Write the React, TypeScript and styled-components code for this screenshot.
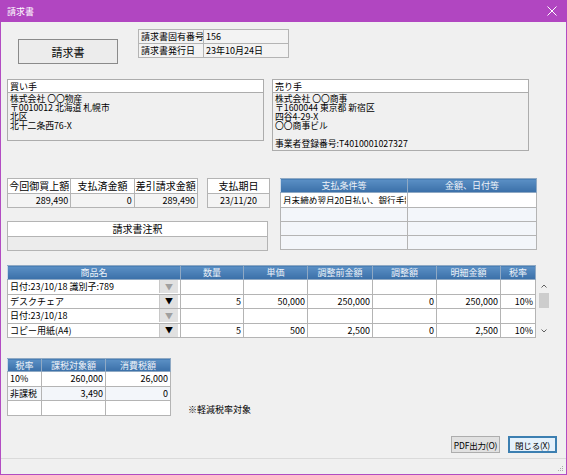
import styled, { createGlobalStyle } from "styled-components";

const GlobalStyle = createGlobalStyle`
  body { margin: 0; background: #fff; }
  * { box-sizing: border-box; }
  table { border-collapse: collapse; table-layout: fixed; }
`;

const Window = styled.div`
  width: 567px;
  height: 475px;
  display: flex;
  flex-direction: column;
  font-family: "Noto Sans CJK JP", "Noto Sans", sans-serif;
  font-size: 9px;
  color: #000;
`;

const TitleBar = styled.div`
  height: 22px;
  flex-shrink: 0;
  background: #b146c1;
  color: #fff;
  display: flex;
  align-items: center;
  justify-content: space-between;
  padding: 0 10px 0 7px;
  font-size: 9px;
`;

const Body = styled.div`
  flex: 1;
  display: flex;
  flex-direction: column;
  background: #f0f0f0;
  border: 1px solid #b24cc2;
  border-top: none;
  padding: 0 6px;
`;

const TopRow = styled.div`
  margin-top: 7px;
  display: flex;
  align-items: flex-start;
  padding-left: 11px;
  gap: 20px;
`;

const BigButton = styled.div`
  margin-top: 10px;
  width: 100px;
  height: 25px;
  border: 1px solid #8a8a8a;
  background: #ececec;
  display: flex;
  align-items: center;
  justify-content: center;
  font-size: 11px;
`;

const Cell = styled.td<{ $align?: string; $bg?: string; $h?: number }>`
  border: 1px solid #b4b4b4;
  height: ${(p) => p.$h ?? 14}px;
  padding: 0 2px;
  text-align: ${(p) => p.$align ?? "left"};
  background: ${(p) => p.$bg ?? "#fff"};
  white-space: nowrap;
  overflow: hidden;
  line-height: 1;
`;

const HeadCell = styled.th<{ $h?: number }>`
  border: 1px solid #8fa9c4;
  border-left-color: #c9d8e8;
  height: ${(p) => p.$h ?? 14}px;
  padding: 0;
  font-weight: normal;
  color: #eef3f9;
  background: linear-gradient(#5b90c5, #3a6fa8);
  line-height: 1;
`;

const PlainHead = styled.td`
  border: 1px solid #b4b4b4;
  height: 15px;
  background: #fff;
  text-align: center;
  font-size: 10px;
  line-height: 1;
`;

const PartyRow = styled.div`
  margin-top: 15px;
  display: flex;
  align-items: flex-start;
  gap: 8px;
`;

const Party = styled.div`
  width: 257px;
`;

const PartyHead = styled.div`
  height: 14px;
  border: 1px solid #acacac;
  background: #fff;
  padding: 2px 2px 0;
  line-height: 1;
`;

const PartyBody = styled.div<{ $h: number }>`
  height: ${(p) => p.$h}px;
  border: 1px solid #acacac;
  border-top: none;
  padding: 1px 2px;
`;

const PartyLine = styled.div`
  height: 9px;
  line-height: 9px;
  font-size: 8.8px;
`;

const MidRow = styled.div`
  margin-top: 27px;
  display: flex;
  align-items: flex-start;
  gap: 7px;
`;

const LeftCol = styled.div`
  width: 266px;
  display: flex;
  flex-direction: column;
  gap: 13px;
`;

const AmountRow = styled.div`
  display: flex;
  gap: 9px;
`;

const TermsText = styled.div`
  width: 123px;
  overflow: hidden;
  white-space: nowrap;
  font-size: 8.6px;
`;

const GridRow = styled.div`
  margin-top: 14px;
  display: flex;
  align-items: flex-start;
`;

const NameCell = styled.div`
  display: flex;
  align-items: center;
  justify-content: space-between;
  height: 100%;
`;

const DropBtn = styled.span<{ $dim?: boolean }>`
  width: 19px;
  height: 13px;
  margin-right: 2px;
  background: #e1e1e1;
  border-left: 1px solid #c8c8c8;
  display: flex;
  align-items: center;
  justify-content: center;
  font-size: 8px;
  color: ${(p) => (p.$dim ? "#a0a0a0" : "#000")};
`;

const ScrollBar = styled.div`
  margin-left: 3px;
  margin-top: 14px;
  width: 10px;
  height: 58px;
  display: flex;
  flex-direction: column;
  align-items: center;
`;

const Thumb = styled.div`
  width: 10px;
  height: 15px;
  background: #cdcdcd;
  margin: 3px 0 auto;
`;

const BottomRow = styled.div`
  margin-top: 20px;
  display: flex;
  align-items: flex-end;
`;

const Note = styled.div`
  margin-left: 17px;
  font-size: 9px;
`;

const ButtonRow = styled.div`
  margin-top: 20px;
  display: flex;
  justify-content: flex-end;
  gap: 8px;
  padding-right: 3px;
`;

const Btn = styled.div<{ $focus?: boolean }>`
  width: 49px;
  height: 17px;
  display: flex;
  align-items: center;
  justify-content: center;
  white-space: nowrap;
  letter-spacing: -0.2px;
  background: ${(p) => (p.$focus ? "#e5f1fb" : "#e1e1e1")};
  border: ${(p) => (p.$focus ? "2px solid #3c7fb1" : "1px solid #adadad")};
  font-size: 8.5px;
`;

const StatusBar = styled.div`
  margin: auto -6px 0;
  height: 16px;
  border-top: 1px solid #dadada;
  display: flex;
  justify-content: flex-end;
  align-items: flex-end;
  padding: 0 2px 2px 0;
`;

const items = [
  { name: "日付:23/10/18 識別子:789", dim: true },
  { name: "デスクチェア", qty: "5", price: "50,000", pre: "250,000", adj: "0", amt: "250,000", rate: "10%" },
  { name: "日付:23/10/18", dim: true },
  { name: "コピー用紙(A4)", qty: "5", price: "500", pre: "2,500", adj: "0", amt: "2,500", rate: "10%" },
];

export default function App() {
  return (
    <>
      <GlobalStyle />
      <Window>
        <TitleBar>
          <span>請求書</span>
          <svg width="10" height="10" viewBox="0 0 10 10">
            <path d="M0.5 0.5 L9.5 9.5 M9.5 0.5 L0.5 9.5" stroke="#fff" strokeWidth="1" />
          </svg>
        </TitleBar>
        <Body>
          <TopRow>
            <BigButton>請求書</BigButton>
            <table style={{ width: 150 }}>
              <colgroup>
                <col style={{ width: 65 }} />
                <col style={{ width: 85 }} />
              </colgroup>
              <tbody>
                <tr>
                  <Cell $bg="#f3f3f3">請求書固有番号</Cell>
                  <Cell $bg="#f3f3f3">156</Cell>
                </tr>
                <tr>
                  <Cell $bg="#f3f3f3">請求書発行日</Cell>
                  <Cell $bg="#f3f3f3">23年10月24日</Cell>
                </tr>
              </tbody>
            </table>
          </TopRow>

          <PartyRow>
            <Party>
              <PartyHead>買い手</PartyHead>
              <PartyBody $h={48}>
                <PartyLine>株式会社 〇〇物産</PartyLine>
                <PartyLine>〒0010012 北海道 札幌市</PartyLine>
                <PartyLine>北区</PartyLine>
                <PartyLine>北十二条西76-X</PartyLine>
              </PartyBody>
            </Party>
            <Party>
              <PartyHead>売り手</PartyHead>
              <PartyBody $h={58}>
                <PartyLine>株式会社 〇〇商事</PartyLine>
                <PartyLine>〒1600044 東京都 新宿区</PartyLine>
                <PartyLine>四谷4-29-X</PartyLine>
                <PartyLine>〇〇商事ビル</PartyLine>
                <PartyLine />
                <PartyLine>事業者登録番号:T4010001027327</PartyLine>
              </PartyBody>
            </Party>
          </PartyRow>

          <MidRow>
            <LeftCol>
              <AmountRow>
                <table style={{ width: 191 }}>
                  <tbody>
                    <tr>
                      <PlainHead>今回御買上額</PlainHead>
                      <PlainHead>支払済金額</PlainHead>
                      <PlainHead>差引請求金額</PlainHead>
                    </tr>
                    <tr>
                      <Cell $align="right" $bg="#f4f4f4">289,490</Cell>
                      <Cell $align="right" $bg="#f4f4f4">0</Cell>
                      <Cell $align="right" $bg="#f4f4f4">289,490</Cell>
                    </tr>
                  </tbody>
                </table>
                <table style={{ width: 63 }}>
                  <tbody>
                    <tr>
                      <PlainHead>支払期日</PlainHead>
                    </tr>
                    <tr>
                      <Cell $align="center" $bg="#f4f4f4">23/11/20</Cell>
                    </tr>
                  </tbody>
                </table>
              </AmountRow>
              <table style={{ width: 261 }}>
                <tbody>
                  <tr>
                    <PlainHead>請求書注釈</PlainHead>
                  </tr>
                  <tr>
                    <Cell $bg="#ececec"></Cell>
                  </tr>
                </tbody>
              </table>
            </LeftCol>
            <table style={{ width: 256 }}>
              <colgroup>
                <col style={{ width: 127 }} />
                <col style={{ width: 129 }} />
              </colgroup>
              <thead>
                <tr>
                  <HeadCell>支払条件等</HeadCell>
                  <HeadCell>金額、日付等</HeadCell>
                </tr>
              </thead>
              <tbody>
                <tr>
                  <Cell $h={15}>
                    <TermsText>月末締め翌月20日払い、銀行手数料</TermsText>
                  </Cell>
                  <Cell $h={15}></Cell>
                </tr>
                {[0, 1, 2].map((i) => (
                  <tr key={i}>
                    <Cell $h={14} $bg="#f3f6fa"></Cell>
                    <Cell $h={14} $bg="#f3f6fa"></Cell>
                  </tr>
                ))}
              </tbody>
            </table>
          </MidRow>

          <GridRow>
            <table style={{ width: 528 }}>
              <colgroup>
                <col style={{ width: 173 }} />
                <col style={{ width: 63 }} />
                <col style={{ width: 64 }} />
                <col style={{ width: 65 }} />
                <col style={{ width: 64 }} />
                <col style={{ width: 64 }} />
                <col style={{ width: 35 }} />
              </colgroup>
              <thead>
                <tr>
                  <HeadCell>商品名</HeadCell>
                  <HeadCell>数量</HeadCell>
                  <HeadCell>単価</HeadCell>
                  <HeadCell>調整前金額</HeadCell>
                  <HeadCell>調整額</HeadCell>
                  <HeadCell>明細金額</HeadCell>
                  <HeadCell>税率</HeadCell>
                </tr>
              </thead>
              <tbody>
                {items.map((it, i) => (
                  <tr key={i}>
                    <Cell $h={14.5} style={{ paddingRight: 0 }}>
                      <NameCell>
                        <span>{it.name}</span>
                        <DropBtn $dim={it.dim}>▼</DropBtn>
                      </NameCell>
                    </Cell>
                    <Cell $h={14.5} $align="right">{it.qty}</Cell>
                    <Cell $h={14.5} $align="right">{it.price}</Cell>
                    <Cell $h={14.5} $align="right">{it.pre}</Cell>
                    <Cell $h={14.5} $align="right">{it.adj}</Cell>
                    <Cell $h={14.5} $align="right">{it.amt}</Cell>
                    <Cell $h={14.5} $align="right">{it.rate}</Cell>
                  </tr>
                ))}
              </tbody>
            </table>
            <ScrollBar>
              <svg width="8" height="8" viewBox="0 0 8 8" style={{ marginTop: 3 }}>
                <path d="M1.5 5.5 L4 3 L6.5 5.5" fill="none" stroke="#606060" strokeWidth="1" />
              </svg>
              <Thumb />
              <svg width="8" height="8" viewBox="0 0 8 8" style={{ marginBottom: 2 }}>
                <path d="M1.5 2.5 L4 5 L6.5 2.5" fill="none" stroke="#606060" strokeWidth="1" />
              </svg>
            </ScrollBar>
          </GridRow>

          <BottomRow>
            <table style={{ width: 163 }}>
              <colgroup>
                <col style={{ width: 34 }} />
                <col style={{ width: 64 }} />
                <col style={{ width: 65 }} />
              </colgroup>
              <thead>
                <tr>
                  <HeadCell $h={13}>税率</HeadCell>
                  <HeadCell $h={13}>課税対象額</HeadCell>
                  <HeadCell $h={13}>消費税額</HeadCell>
                </tr>
              </thead>
              <tbody>
                <tr>
                  <Cell $h={14.5}>10%</Cell>
                  <Cell $h={14.5} $align="right">260,000</Cell>
                  <Cell $h={14.5} $align="right">26,000</Cell>
                </tr>
                <tr>
                  <Cell $h={14.5} $bg="#f3f6fa">非課税</Cell>
                  <Cell $h={14.5} $align="right" $bg="#f3f6fa">3,490</Cell>
                  <Cell $h={14.5} $align="right" $bg="#f3f6fa">0</Cell>
                </tr>
                <tr>
                  <Cell $h={15}></Cell>
                  <Cell $h={15}></Cell>
                  <Cell $h={15}></Cell>
                </tr>
              </tbody>
            </table>
            <Note>※軽減税率対象</Note>
          </BottomRow>

          <ButtonRow>
            <Btn>PDF出力(O)</Btn>
            <Btn $focus>閉じる(X)</Btn>
          </ButtonRow>

          <StatusBar>
            <svg width="8" height="8" viewBox="0 0 8 8">
              <rect x="6" y="2" width="1" height="1" fill="#aaa" />
              <rect x="4" y="4" width="1" height="1" fill="#aaa" />
              <rect x="6" y="4" width="1" height="1" fill="#aaa" />
              <rect x="2" y="6" width="1" height="1" fill="#aaa" />
              <rect x="4" y="6" width="1" height="1" fill="#aaa" />
              <rect x="6" y="6" width="1" height="1" fill="#aaa" />
            </svg>
          </StatusBar>
        </Body>
      </Window>
    </>
  );
}
